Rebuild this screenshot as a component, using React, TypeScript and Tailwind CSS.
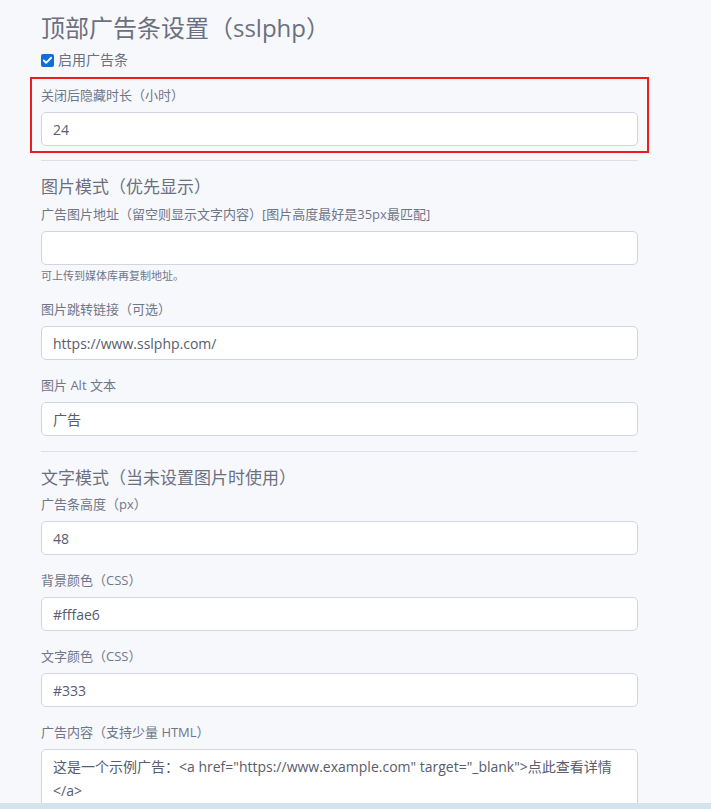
import { Check } from 'lucide-react';

const font = { fontFamily: '"Open Sans", "Noto Sans CJK SC", sans-serif' };

function Field({ label, value, help }: { label: string; value?: string; help?: string }) {
  return (
    <div className="mb-[15px]">
      <label className="block text-[13px] leading-[20px] text-[#70768a] mb-[7px]">{label}</label>
      <div className="h-[34px] w-full rounded-[5px] border border-[#d3d4e2] bg-white px-[11px] flex items-center text-[14px] text-[#575c6e]">
        {value}
      </div>
      {help && <p className="mt-[3px] text-[11px] leading-[16px] text-[#70768a]">{help}</p>}
    </div>
  );
}

export default function App() {
  return (
    <div className="h-[809px] flex flex-col overflow-hidden bg-[#f7f8fc]" style={font}>
      <div className="flex-1 overflow-hidden pl-[41px] pt-[12px]">
        <div className="w-[597px]">
          <h1 className="text-[24px] leading-[32px] text-[#6b7080]">顶部广告条设置（sslphp）</h1>

          <label className="mt-[6px] flex items-center gap-[4px] text-[14px] leading-[20px] text-[#6b7080]">
            <span className="h-[13px] w-[13px] rounded-[2px] bg-[#0b6fdf] flex items-center justify-center">
              <Check className="h-[11px] w-[11px] text-white" strokeWidth={4} />
            </span>
            启用广告条
          </label>

          {/* highlighted field */}
          <div className="mt-[7px] -mx-[11px] border-2 border-[#ee1c1c] px-[9px] pt-[6px] pb-[5px]">
            <label className="block text-[13px] leading-[20px] text-[#70768a] mb-[7px]">关闭后隐藏时长（小时）</label>
            <div className="h-[34px] w-full rounded-[5px] border border-[#d3d4e2] bg-white px-[11px] flex items-center text-[14px] text-[#575c6e]">
              24
            </div>
          </div>

          <hr className="mt-[7px] border-t border-[#dddee6]" />

          <h2 className="mt-[14px] text-[17px] leading-[24px] text-[#6b7080]">图片模式（优先显示）</h2>
          <div className="mt-[5px]">
            <Field
              label="广告图片地址（留空则显示文字内容）[图片高度最好是35px最匹配]"
              value=""
              help="可上传到媒体库再复制地址。"
            />
            <Field label="图片跳转链接（可选）" value="https://www.sslphp.com/" />
            <Field label="图片 Alt 文本" value="广告" />
          </div>

          <hr className="border-t border-[#dddee6]" />

          <h2 className="mt-[14px] text-[17px] leading-[24px] text-[#6b7080]">文字模式（当未设置图片时使用）</h2>
          <div className="mt-[4px]">
            <Field label="广告条高度（px）" value="48" />
            <Field label="背景颜色（CSS）" value="#fffae6" />
            <Field label="文字颜色（CSS）" value="#333" />
            <div>
              <label className="block text-[13px] leading-[20px] text-[#70768a] mb-[7px]">广告内容（支持少量 HTML）</label>
              <div className="h-[120px] w-full rounded-[5px] border border-[#d3d4e2] bg-white px-[11px] py-[5px] text-[14px] leading-[24px] text-[#575c6e]">
                这是一个示例广告：&lt;a href="https://www.example.com" target="_blank"&gt;点此查看详情 &lt;/a&gt;
              </div>
            </div>
          </div>
        </div>
      </div>
      <div className="h-[6px] bg-[#d5e3ec]" />
    </div>
  );
}
